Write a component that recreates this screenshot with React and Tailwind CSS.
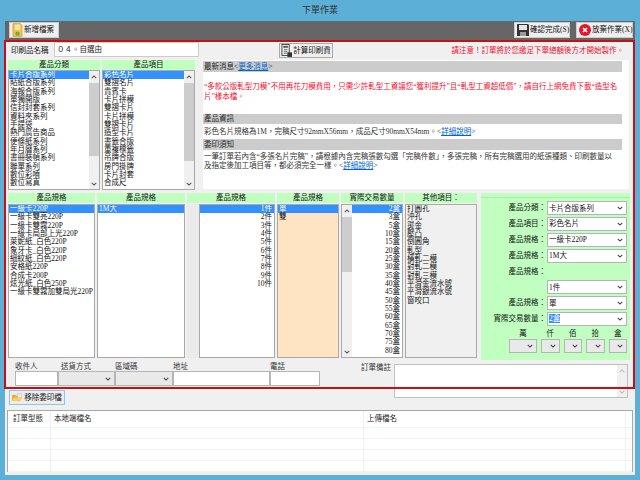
import React from 'react';

const categories = ['卡片合版系列', '貼紙合版系列', '海報合版系列', '單獨開版', '信封封套系列', '資料夾系列', '手提袋', '熱門廣告商品', '便條紙系列', '年月曆系列', '書冊裝幀系列', '聯單系列', '數位彩噴', '數位寫真'];
const products = ['彩色名片', '雙摺名片', '貴賓卡', '卡片拼模', '雙摺卡片', '卡片拼模', '雙摺卡片', '造型卡片', '書籤合版', '重複標籤', '吊牌合版', '房門掛牌', '卡片封套', '合成尺'];
const papers = ['一級卡220P', '一級卡雙亮220P', '一級卡雙霧220P', '一級卡局部上光220P', '萊妮紙_白色220P', '象牙卡_白色220P', '細紋紙_白色220P', '安格紙220P', '合成卡200P', '炫光紙_白色250P', '一級卡雙霧加雙局光220P'];
const pieces = ['1件', '2件', '3件', '4件', '5件', '6件', '7件', '8件', '9件', '10件'];
const quantities = ['2盒', '3盒', '5盒', '10盒', '15盒', '20盒', '25盒', '30盒', '35盒', '40盒', '45盒', '50盒', '55盒', '60盒', '65盒', '70盒', '75盒', '80盒'];
const extras = ['打圓孔', '沖孔', '燙金', '壓凸', '倒圓角', '軋型', '橫軋二模', '對軋二模', '對軋三模', '平滑金流水號', '平滑銀流水號', '窗咬口'];

function Chevron({ up, className = '' }) {
  return (
    <svg viewBox="0 0 8 5" className={`w-[6px] h-[4px] ${className}`} fill="none" stroke="currentColor" strokeWidth="1.4">
      <path d={up ? 'M1 4 L4 1 L7 4' : 'M1 1 L4 4 L7 1'} />
    </svg>
  );
}

// Vertical scrollbar used by the list boxes
function ScrollBar({ thumbTop, thumbHeight, className = '' }) {
  return (
    <div className={`w-[10px] shrink-0 bg-[#f0f0f0] flex flex-col items-center text-[#555] ${className}`}>
      <div className="h-[11px] flex items-center justify-center"><Chevron up /></div>
      <div className="flex-1 w-full">
        <div className="w-full bg-[#cdcdcd]" style={{ marginTop: thumbTop, height: thumbHeight }} />
      </div>
      <div className="h-[11px] flex items-center justify-center"><Chevron /></div>
    </div>
  );
}

function ListBox({ items, selected = -1, right, className = '', width, bg = 'bg-white', scroll }) {
  return (
    <div className={`border border-[#a9a9a9] overflow-hidden flex shrink-0 h-full ${bg} ${width} ${className}`}>
      {scroll && scroll.side === 'left' && <ScrollBar thumbTop={scroll.top} thumbHeight={scroll.height} />}
      <div className="flex-1 min-w-0">
        {items.map((item, i) => (
          <div
            key={i}
            className={`h-[8.33px] leading-[8.33px] px-px whitespace-nowrap ${right ? 'text-right pr-[2px]' : ''} ${i === selected ? 'bg-[#3390ff] text-white' : 'text-[#111]'}`}
          >
            {item}
          </div>
        ))}
      </div>
      {scroll && scroll.side === 'right' && <ScrollBar thumbTop={scroll.top} thumbHeight={scroll.height} />}
    </div>
  );
}

function GreenHead({ children, width }) {
  return <div className={`h-[10px] leading-[10px] bg-[#c0ffc0] text-center text-[#111] shrink-0 ${width}`}>{children}</div>;
}

function Select({ value, width, gray, highlight }) {
  return (
    <div className={`h-[14px] border border-[#b5b5b5] flex items-center justify-between pl-[1px] pr-[3px] shrink-0 ${width} ${gray ? 'bg-[#e9e9e9]' : 'bg-white'}`}>
      <span className={`leading-[9px] text-[#111] ${highlight ? 'bg-[#3390ff] text-white' : ''}`}>{value}</span>
      <Chevron className="text-[#444]" />
    </div>
  );
}

function FormRow({ label, value }) {
  return (
    <div className="h-[14px] flex items-center">
      <div className="w-[66px] text-right pr-[1px] text-[#111] whitespace-nowrap">{label}</div>
      {value && <Select value={value} width="w-[80px]" />}
    </div>
  );
}

function ToolButton({ icon, label, className = '' }) {
  return (
    <div className={`h-[16px] bg-[#efefef] border border-[#ccc] flex items-center gap-[1px] px-[2px] text-[#111] whitespace-nowrap ${className}`}>
      {icon}
      <span>{label}</span>
    </div>
  );
}

function SectionBar({ children, className = '' }) {
  return <div className={`h-[11px] leading-[11px] bg-[#cccccc] text-[#222] pl-[1px] ${className}`}>{children}</div>;
}

const FileIcon = (
  <svg viewBox="0 0 12 14" className="w-[11px] h-[14px] shrink-0">
    <path d="M1 0 H9 L11 2 V14 H1 Z" fill="#f2c14e" stroke="#c98f1e" strokeWidth="0.6" />
    <rect x="3" y="1" width="6" height="6" fill="#fbe39a" />
    <circle cx="6" cy="11" r="2.4" fill="#6fae3c" />
  </svg>
);
const CalcIcon = (
  <svg viewBox="0 0 12 14" className="w-[11px] h-[13px] shrink-0">
    <rect x="1" y="0.5" width="8" height="12" fill="#e8efe8" stroke="#444" />
    <rect x="2.5" y="2" width="5" height="2" fill="#555" />
    <path d="M3 6 H7 M3 8 H7 M3 10 H7" stroke="#555" strokeWidth="0.8" />
    <rect x="7" y="9" width="5" height="5" fill="#333" />
  </svg>
);
const SaveIcon = (
  <svg viewBox="0 0 12 12" className="w-[12px] h-[12px] shrink-0">
    <path d="M0 0 H11 L12 1 V12 H0 Z" fill="#333" />
    <rect x="2" y="1" width="8" height="5" fill="#e5e5e5" />
    <rect x="3" y="8" width="6" height="4" fill="#9a9a9a" />
  </svg>
);
const CancelIcon = (
  <svg viewBox="0 0 12 12" className="w-[12px] h-[12px] shrink-0">
    <circle cx="6" cy="6" r="6" fill="#e2152b" />
    <path d="M4 4 L8 8 M8 4 L4 8" stroke="#fff" strokeWidth="1.6" />
  </svg>
);
const FolderIcon = (
  <svg viewBox="0 0 12 10" className="w-[10px] h-[9px] shrink-0">
    <path d="M0 2 H4 L5 3 H10 V9 H0 Z" fill="#e9a92c" />
    <path d="M6 1 L11 0 L12 5 L7 6 Z" fill="#eee" stroke="#999" strokeWidth="0.4" />
    <path d="M0 9 L2 5 H12 L10 9 Z" fill="#f7cf62" />
  </svg>
);

function Link({ children }) {
  return <>&lt;<span className="text-[#0066cc] underline">{children}</span>&gt;</>;
}

export default function App() {
  return (
    <div className="w-[640px] h-[480px] bg-[#5cafd6] overflow-hidden flex flex-col text-[7.5px] font-['Liberation_Serif','Noto_Sans_CJK_TC',serif]">
      {/* Title bar */}
      <div className="h-[21px] shrink-0 flex items-center justify-center text-[9px] text-[#333]">下單作業</div>

      <div className="ml-[5px] w-[630px] h-[454px] bg-[#f0f0f0] flex flex-col">
        {/* Toolbar */}
        <div className="h-[19px] shrink-0 bg-[#666666] flex items-start justify-between pt-px pl-[4px] pr-[2px]">
          <ToolButton icon={FileIcon} label="新增檔案" className="w-[50px]" />
          <div className="flex gap-[6px]">
            <ToolButton icon={SaveIcon} label="確認完成(S)" className="w-[56px]" />
            <ToolButton icon={CancelIcon} label="放棄作業(X)" className="w-[57px]" />
          </div>
        </div>

        {/* Order form, framed in red */}
        <div className="relative -ml-px w-[631px] h-[349px] shrink-0 pl-[4px] pt-[2px]">
          <div className="h-[18px] flex items-start">
            <div className="w-[46px] mt-[3px] pl-[3px] text-[#111] whitespace-nowrap">印刷品名稱</div>
            <div className="w-[145px] h-[15px] bg-white border border-[#ccc] leading-[13px] pl-[2px] text-[#222]">０４。自選由</div>
            <div className="ml-[80px] mt-px w-[54px] h-[15px] bg-[#efefef] border border-[#aaa] flex items-center justify-center gap-px text-[#111] whitespace-nowrap">
              {CalcIcon}計算印刷費
            </div>
            <div className="ml-auto mr-[11px] mt-[3px] text-[#f01030] whitespace-nowrap">請注意！訂單將於您繳足下單總額後方才開始製作。</div>
          </div>

          {/* Upper lists and news panel */}
          <div className="flex h-[130px]">
            <div className="w-[92px] flex flex-col">
              <GreenHead>產品分類</GreenHead>
              <ListBox items={categories} selected={0} width="w-full" className="!h-[120px]" scroll={{ side: 'right', top: 1, height: 73 }} />
            </div>
            <div className="ml-[2px] w-[93px] flex flex-col">
              <GreenHead>產品項目</GreenHead>
              <ListBox items={products} selected={0} width="w-full" className="!h-[120px]" scroll={{ side: 'right', top: 1, height: 78 }} />
            </div>
            <div className="ml-[8px] w-[426px] h-[129px] bg-white pt-px">
              <SectionBar className="w-[419px]">最新消息<Link>更多消息</Link></SectionBar>
              <div className="mt-[10px] h-[32px] w-[419px] pl-px leading-[9.5px] text-[#f01030]">
                “多款公版軋型刀模”不用再花刀模費用，只需少許軋型工資讓您“獲利提升”且“軋型工資超低價”，請自行上網免費下載“造型名片”樣本檔。
              </div>
              <SectionBar className="w-[419px] !h-[10px] !leading-[10px]">產品資訊</SectionBar>
              <div className="h-[15px] leading-[13px] pl-px pt-px text-[#333]">彩色名片規格為1M，完稿尺寸92mmX56mm，成品尺寸90mmX54mm。<Link>詳細說明</Link></div>
              <SectionBar className="w-[419px]">委印須知</SectionBar>
              <div className="w-[419px] mt-[2px] pl-px leading-[9px] text-[#333]">
                <div className="whitespace-nowrap">一筆訂單若內含“多張名片完稿”，請根據內含完稿張數勾選「完稿件數」，多張完稿，所有完稿選用的紙張種類、印刷數量以</div>
                <div className="whitespace-nowrap">及指定後加工項目等，都必須完全一樣。<Link>詳細說明</Link></div>
              </div>
            </div>
          </div>

          {/* Spec lists and selection panel */}
          <div className="flex mt-[3px] h-[167px]">
            <div className="w-[87px] flex flex-col">
              <GreenHead>產品規格</GreenHead>
              <ListBox items={papers} selected={0} width="w-full" className="!h-[154px] mt-px" />
            </div>
            <div className="ml-[2px] w-[88px] flex flex-col">
              <GreenHead>產品規格</GreenHead>
              <ListBox items={['1M大']} selected={0} width="w-full" className="!h-[154px] mt-px" />
            </div>
            <div className="ml-[2px] w-[88px] flex flex-col">
              <GreenHead>產品規格</GreenHead>
              <div className="flex mt-px">
                <div className="w-[12px] h-[154px] bg-[#ebebeb]" />
                <ListBox items={pieces} selected={0} right width="w-[76px]" className="!h-[154px]" />
              </div>
            </div>
            <div className="ml-[2px] w-[62px] flex flex-col">
              <GreenHead>產品規格</GreenHead>
              <ListBox items={['單', '雙']} selected={0} width="w-full" bg="bg-[#ffe4c4]" className="!h-[154px] mt-px" />
            </div>
            <div className="ml-[2px] w-[62px] flex flex-col">
              <GreenHead>實際交易數量</GreenHead>
              <ListBox items={quantities} selected={0} right width="w-full" className="!h-[154px] mt-px" scroll={{ side: 'left', top: 1, height: 55 }} />
            </div>
            <div className="ml-[2px] w-[72px] flex flex-col">
              <GreenHead>其他項目：</GreenHead>
              <ListBox items={extras} width="w-full" bg="bg-[#f0f0f0]" className="!h-[154px] mt-px" />
            </div>
            <div className="ml-[4px] w-[149px] h-[167px] bg-[#c0ffc0] pl-[0px] pt-[4px]">
              <div className="border-t border-[#aaeeaa] pt-[3px] flex flex-col gap-[1.85px]">
                <FormRow label="產品分類：" value="卡片合版系列" />
                <FormRow label="產品項目：" value="彩色名片" />
                <FormRow label="產品規格：" value="一級卡220P" />
                <FormRow label="產品規格：" value="1M大" />
                <FormRow label="產品規格：" />
                <FormRow label="" value="1件" />
                <FormRow label="產品規格：" value="單" />
                <div className="h-[14px] flex items-center">
                  <div className="w-[66px] text-right pr-[1px] text-[#111] whitespace-nowrap">實際交易數量：</div>
                  <Select value="2盒" width="w-[80px]" highlight />
                </div>
              </div>
              <div className="flex pl-[28px] mt-[2px] gap-[4px]">
                {[['萬', 'w-[28px]'], ['仟', 'w-[18.5px]'], ['佰', 'w-[18.5px]'], ['拾', 'w-[18.5px]'], ['盒', 'w-[18.5px]']].map(([label, width]) => (
                  <div key={label} className={`${width} flex flex-col items-center`}>
                    <div className="h-[11px] leading-[11px] text-[#111]">{label}</div>
                    <Select value="" width={width} gray />
                  </div>
                ))}
              </div>
            </div>
          </div>

          {/* Delivery fields */}
          <div className="flex pl-[7px] mt-[2px] items-start">
            <div className="w-[43px] shrink-0">
              <div className="h-[9px] leading-[9px] text-[#333]">收件人</div>
              <div className="h-[15px] bg-white border border-[#b5b5b5]" />
            </div>
            <div className="w-[57px] shrink-0">
              <div className="h-[9px] leading-[9px] pl-[3px] text-[#333]">送貨方式</div>
              <Select value="" width="w-[57px] !h-[15px]" gray />
            </div>
            <div className="w-[58px] shrink-0">
              <div className="h-[9px] leading-[9px] text-[#333]">區域碼</div>
              <Select value="" width="w-[58px] !h-[15px]" gray />
            </div>
            <div className="w-[97px] shrink-0">
              <div className="h-[9px] leading-[9px] text-[#333]">地址</div>
              <div className="h-[15px] bg-white border border-[#b5b5b5]" />
            </div>
            <div className="w-[50px] shrink-0">
              <div className="h-[9px] leading-[9px] text-[#333]">電話</div>
              <div className="h-[15px] bg-white border border-[#b5b5b5]" />
            </div>
            <div className="ml-[41px] w-[33px] shrink-0 text-[#333] whitespace-nowrap">訂單備註</div>
            <div className="w-[234px] h-[34px] mt-[2px] bg-white border border-[#c0c0c0] flex justify-end shrink-0">
              <ScrollBar thumbTop={0} thumbHeight={0} className="text-[#bbb]" />
            </div>
          </div>

          {/* Red frame sits over the remark box */}
          <div className="absolute inset-0 border-2 border-[#c80f14] pointer-events-none" />
        </div>

        {/* Upload list */}
        <div className="pl-[4px] h-[21px] shrink-0 pt-px">
          <div className="w-[56px] h-[15px] bg-[#ececec] border border-[#8fc4ee] flex items-center justify-center gap-[2px] text-[#111] whitespace-nowrap">
            {FolderIcon}移除委印檔
          </div>
        </div>
        <div className="ml-[2px] w-[626px] h-[62px] bg-white border border-[#a8a8a8]">
          <div className="h-[17px] flex items-center text-[#222] border-b border-[#eef3f8]">
            <div className="w-[43px] h-full flex items-center pl-[5px] border-r border-[#eef3f8]">訂單型態</div>
            <div className="w-[313px] h-full flex items-center pl-[3px] border-r border-[#eef3f8]">本地端檔名</div>
            <div className="w-[262px] h-full flex items-center pl-[3px] border-r border-[#eef3f8]">上傳檔名</div>
          </div>
          {[0, 1, 2, 3].map((row) => (
            <div key={row} className="h-[11px] flex border-b border-[#f2f2f2]">
              <div className="w-[43px] border-r border-[#f2f2f2]" />
              <div className="w-[313px] border-r border-[#f2f2f2]" />
              <div className="w-[262px] border-r border-[#f2f2f2]" />
            </div>
          ))}
        </div>
      </div>
    </div>
  );
}
